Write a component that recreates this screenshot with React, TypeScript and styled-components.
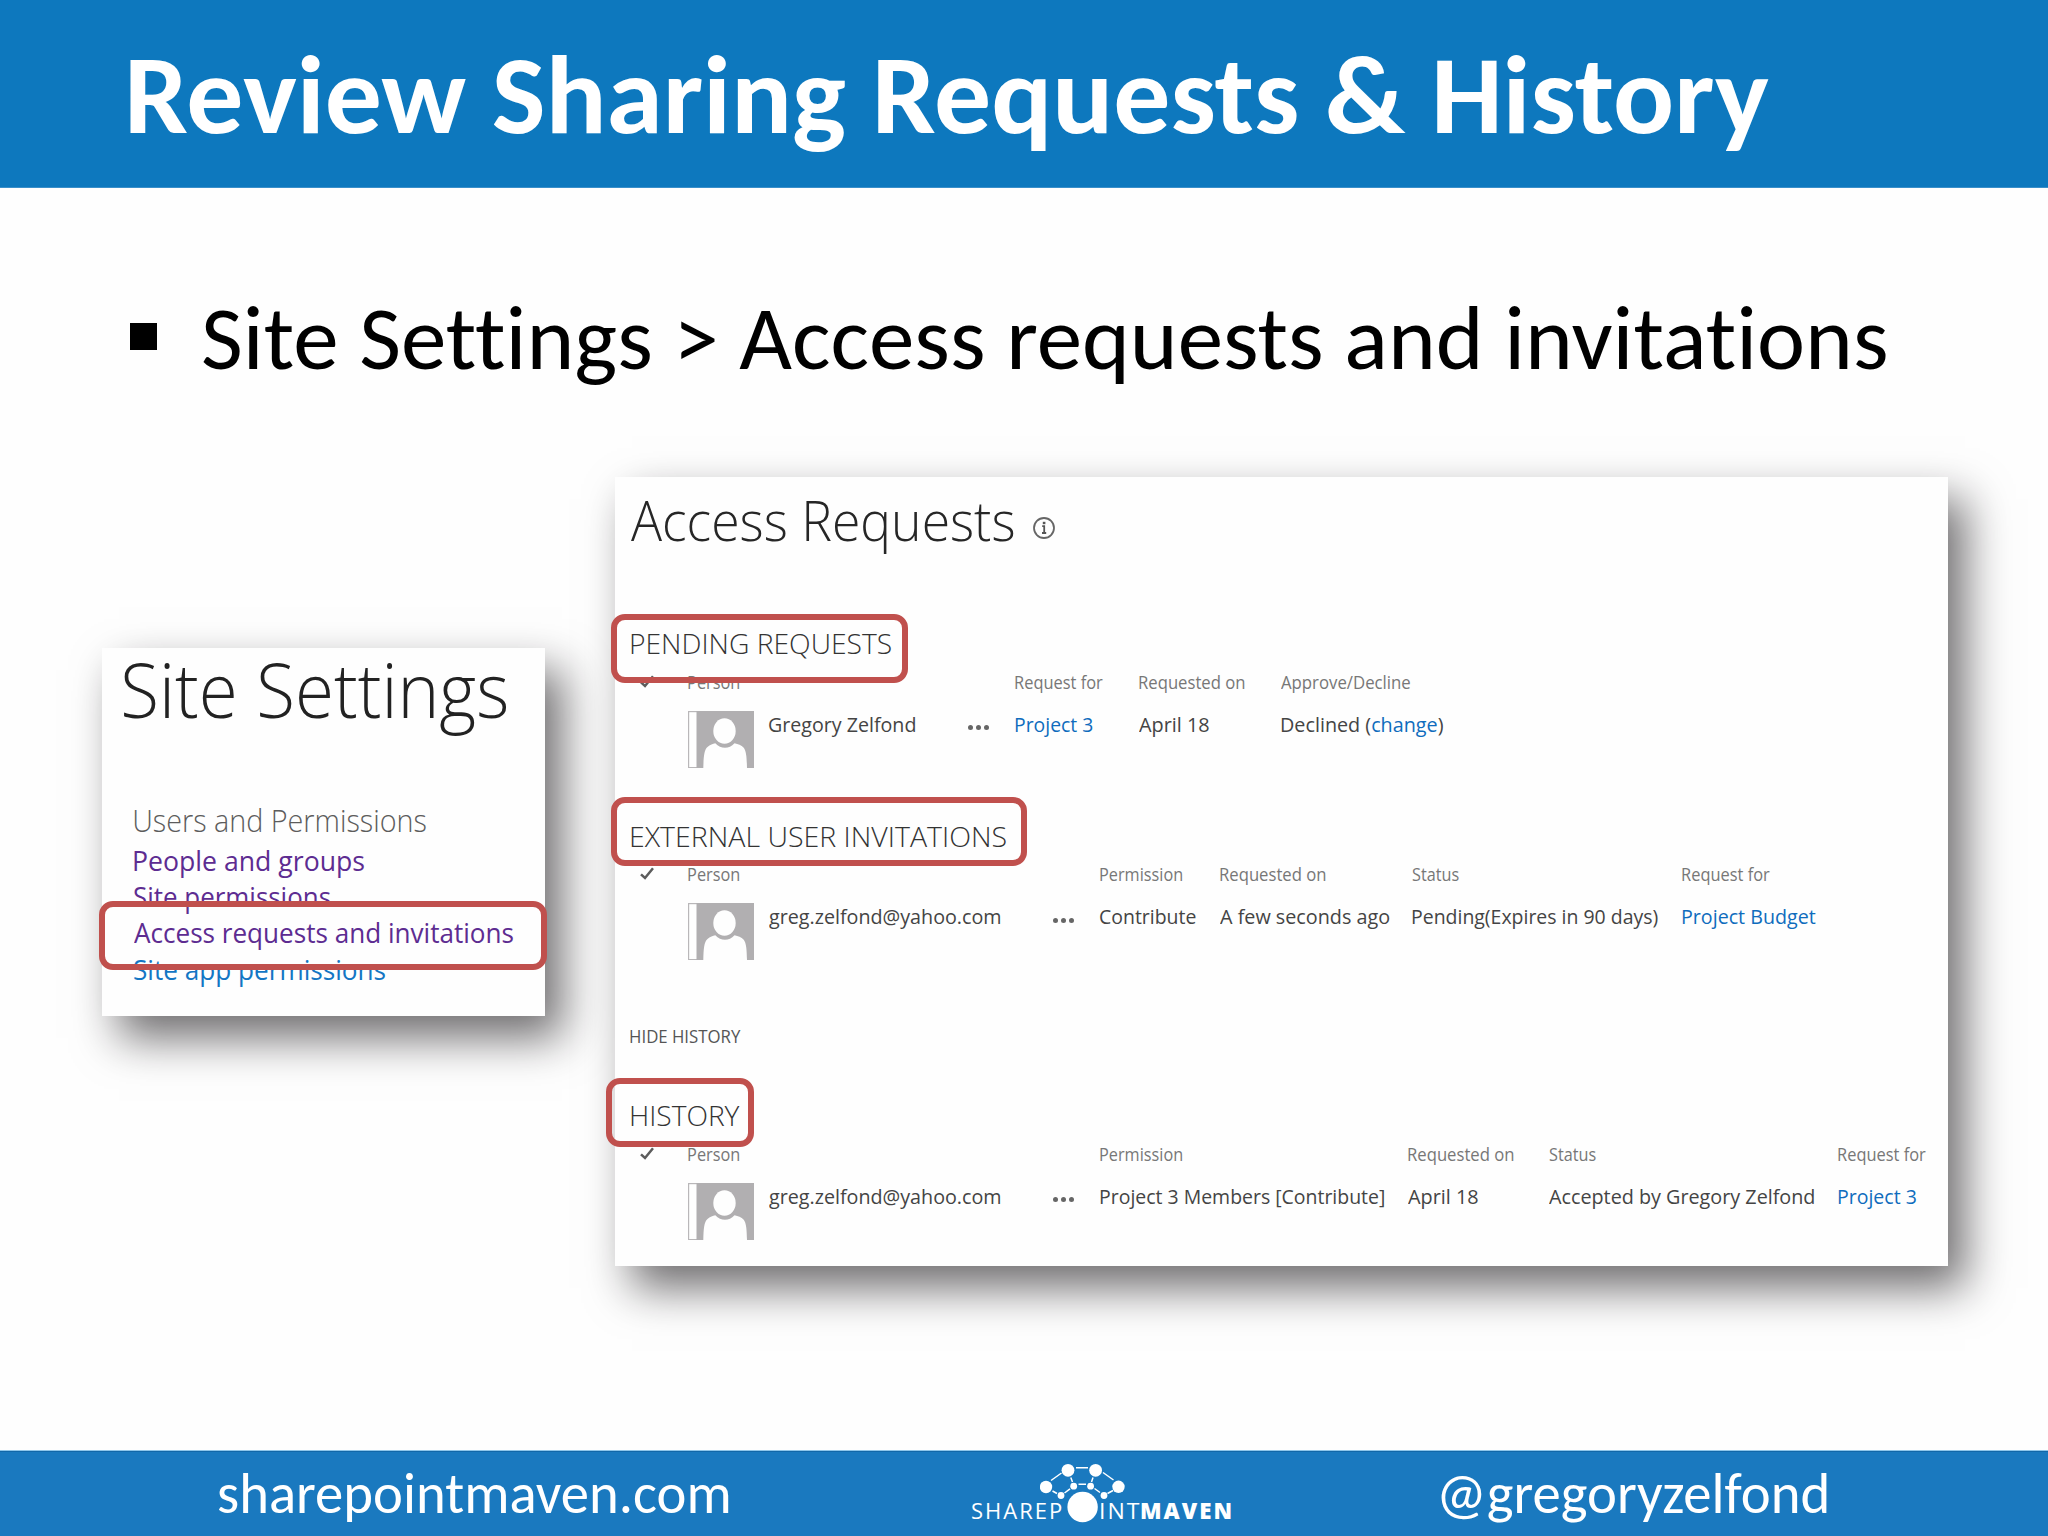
import React, { useLayoutEffect, useRef, useState } from "react";
import styled, { createGlobalStyle } from "styled-components";

const UI = '"Open Sans", "Noto Sans", sans-serif';
const DISPLAY = 'Carlito, Calibri, Lato, "Open Sans", sans-serif';

const GlobalStyle = createGlobalStyle`
  body { margin: 0; background: #fefefe; }
  * { box-sizing: border-box; }
`;

/* ---------- text fitted to an exact ink width ---------- */

const FitBox = styled.div<{ $w: number }>`
  width: ${(p) => p.$w}px;
  flex: none;
  white-space: nowrap;
  font-variant-ligatures: none;
`;

const FitInner = styled.span`
  display: inline-block;
  transform-origin: 0 50%;
`;

function Fit({ w, children }: { w: number; children: React.ReactNode }) {
  const ref = useRef<HTMLSpanElement>(null);
  const [transform, setTransform] = useState("none");
  useLayoutEffect(() => {
    const el = ref.current;
    const ctx = document.createElement("canvas").getContext("2d");
    if (!el || !ctx) return;
    const cs = getComputedStyle(el);
    ctx.font = `${cs.fontWeight} ${cs.fontSize} ${cs.fontFamily}`;
    if (cs.letterSpacing !== "normal") (ctx as any).letterSpacing = cs.letterSpacing;
    const m = ctx.measureText(el.textContent || "");
    const spacing = parseFloat(cs.letterSpacing) || 0;
    const start = -m.actualBoundingBoxLeft;
    const rightBearing = Math.max(0, m.width - m.actualBoundingBoxRight - spacing);
    // The laid-out advance has no ligatures, so the ink width is taken from it.
    const ink = el.offsetWidth - spacing - start - rightBearing;
    const s = w / ink;
    setTransform(`translateX(${-start * s}px) scaleX(${s})`);
  }, [w]);
  return (
    <FitBox $w={w}>
      <FitInner ref={ref} style={{ transform }}>
        {children}
      </FitInner>
    </FitBox>
  );
}

/* ---------- slide frame ---------- */

const Slide = styled.div`
  width: 2048px;
  height: 1536px;
  overflow: hidden;
  display: flex;
  flex-direction: column;
  background: #fefefe;
  font-family: ${UI};
`;

const Banner = styled.header`
  height: 188px;
  flex: none;
  background: #0d78be;
  border-bottom: 1px solid #3a8fca;
  padding: 5px 0 0 130px;
  color: #fff;
  font: 700 112px/180px ${DISPLAY};
`;

const BulletLine = styled.div`
  display: flex;
  align-items: center;
  gap: 46px;
  height: 120px;
  margin: 91px 0 78px;
  padding-left: 130px;
  font: 400 89.5px/120px ${DISPLAY};
  color: #000;
`;

const Bullet = styled.i`
  width: 27px;
  height: 27px;
  background: #000;
  margin-top: -6px;
`;

const Panels = styled.main`
  display: flex;
  align-items: flex-start;
  gap: 70px;
  padding-left: 102px;
`;

const Card = styled.section<{ $w: number; $h: number; $top?: number }>`
  width: ${(p) => p.$w}px;
  height: ${(p) => p.$h}px;
  margin-top: ${(p) => p.$top || 0}px;
  flex: none;
  background: #fefefe;
  box-shadow: 17px 22px 42px rgba(16, 14, 16, 0.6);
`;

const Highlight = styled.span<{ $x: number; $y: number; $w: number }>`
  position: absolute;
  left: ${(p) => p.$x}px;
  top: ${(p) => p.$y}px;
  width: ${(p) => p.$w}px;
  height: 69px;
  border: 6.5px solid #c0504d;
  border-radius: 14px;
  z-index: 2;
`;

/* ---------- site settings card ---------- */

const SettingsTitle = styled.h2`
  margin: 0;
  padding: 1px 0 0 22px;
  height: 81px;
  font: 300 75px/80px ${UI};
  color: #222;
`;

const SettingsGroup = styled.h3`
  margin: 71px 0 3px;
  padding-left: 31.5px;
  font: 300 31px/40px ${UI};
  color: #5c5c5c;
`;

const SettingsLink = styled.div<{ $fresh?: boolean }>`
  position: relative;
  margin-left: 31.5px;
  height: 36.2px;
  font: 400 27px/36.2px ${UI};
  color: ${(p) => (p.$fresh ? "#1376c4" : "#5d2c91")};
`;

/* ---------- access requests card ---------- */

const RequestsTitle = styled.h2`
  display: flex;
  align-items: center;
  gap: 18px;
  margin: 3px 0 63px;
  padding-left: 16px;
  height: 80px;
  font: 300 55px/80px ${UI};
  color: #262626;
`;

const InfoIcon = styled.svg`
  width: 24px;
  height: 24px;
  margin-top: 16px;
`;

const Section = styled.div`
  height: 145px;
`;

const SectionHead = styled.h3`
  position: relative;
  margin: 0 0 6.6px;
  padding-left: 16px;
  height: 40px;
  font: 300 28px/40px ${UI};
  color: #333;
`;

const Row = styled.div<{ $cols: string }>`
  display: grid;
  grid-template-columns: ${(p) => p.$cols};
  align-items: start;
`;

const HeadRow = styled(Row)`
  height: 24px;
  margin-bottom: 16px;
  font: 400 17.5px/25px ${UI};
  color: #777;
`;

const DataRow = styled(Row)`
  height: 58px;
  font: 400 20px/30px ${UI};
  color: #444;
`;

const Link = styled.span`
  color: #0f6cbd;
`;

const CheckIcon = styled.svg`
  width: 14px;
  height: 13px;
  margin: 5px 0 0 25px;
`;

const AvatarSvg = styled.svg`
  display: block;
  width: 66px;
  height: 57px;
  margin-top: 1px;
`;

const Dots = styled.div`
  display: flex;
  gap: 3.2px;
  padding-top: 15.5px;
`;

const Dot = styled.i`
  width: 5px;
  height: 5px;
  border-radius: 50%;
  background: #666;
`;

const HideHistory = styled.div`
  margin: 63px 0 47.5px;
  padding-left: 15px;
  height: 24px;
  font: 400 18px/24px ${UI};
  color: #555;
`;

const Spacer = styled.div`
  height: 47.6px;
`;

function Check() {
  return (
    <CheckIcon viewBox="0 0 14 13" fill="none">
      <path d="M1 7.4 5 11 13 1.2" stroke="#5c5c5c" strokeWidth="2.5" />
    </CheckIcon>
  );
}

function Avatar() {
  return (
    <AvatarSvg viewBox="0 0 66 57">
      <rect x="0.6" y="0.6" width="10" height="56" fill="#fff" stroke="#b9b7b9" strokeWidth="1.2" />
      <rect x="8.5" y="0" width="57.5" height="57" fill="#b1afb1" />
      <path
        d="M15.3 57C15.6 46 16 39 19.5 36 22 33.8 25 33 27.3 32.3 33 38.3 41 38.3 46.5 32.3 50 33.2 53.5 34.2 55.5 36.5 58.5 40 58.7 47 59 57Z"
        fill="#fefefe"
      />
      <ellipse cx="36.5" cy="20" rx="11.2" ry="12.7" fill="#fefefe" />
    </AvatarSvg>
  );
}

type Cell = { w: number; text: React.ReactNode; link?: boolean };

function Requests(props: {
  title: string;
  titleW: number;
  box: [number, number, number];
  cols: string;
  heads: Cell[];
  name: Cell;
  cells: Cell[];
}) {
  const { title, titleW, box, cols, heads, name, cells } = props;
  return (
    <Section>
      <SectionHead>
        <Fit w={titleW}>{title}</Fit>
        <Highlight $x={box[0]} $y={box[1]} $w={box[2]} />
      </SectionHead>
      <HeadRow $cols={cols}>
        <Check />
        <Fit w={51.5}>Person</Fit>
        <span />
        <span />
        {heads.map((c, i) => (
          <Fit key={i} w={c.w}>{c.text}</Fit>
        ))}
      </HeadRow>
      <DataRow $cols={cols}>
        <span />
        <Avatar />
        <Fit w={name.w}>{name.text}</Fit>
        <Dots>
          <Dot />
          <Dot />
          <Dot />
        </Dots>
        {cells.map((c, i) => (
          <Fit key={i} w={c.w}>{c.link ? <Link>{c.text}</Link> : c.text}</Fit>
        ))}
      </DataRow>
    </Section>
  );
}

/* ---------- footer ---------- */

const Footer = styled.footer`
  display: flex;
  align-items: flex-start;
  height: 86px;
  margin-top: auto;
  padding-left: 218px;
  background: #1a79bf;
  border-top: 1px solid #8fc6ea;
  box-shadow: inset 0 1px 0 #1267a8;
  color: #fff;
  font: 400 56.5px/86px ${DISPLAY};
`;

const Logo = styled.div`
  position: relative;
  display: flex;
  width: 259px;
  margin: 0 210px 0 243.5px;
  padding-top: 35px;
  font: 400 22.4px/50px ${UI};
  letter-spacing: 2px;
`;

const LogoGap = styled.span`
  width: 39px;
`;

const LogoBold = styled.span`
  margin-left: 2px;
  font-weight: 800;
`;

const LogoMark = styled.svg`
  position: absolute;
  left: 68px;
  top: 9px;
  width: 90px;
  height: 66px;
`;

function NetworkMark() {
  return (
    <LogoMark viewBox="1040 1460 90 66" fill="#fff">
      <g stroke="#fff" strokeWidth="1.5">
        <path d="M1051 1480.5 1061.5 1473M1076 1467.8H1088M1103 1472.5 1113.5 1480M1052.5 1491 1057 1493.5M1064.5 1493 1070 1488.8M1070.8 1477.5 1072.5 1482M1078.5 1484.3H1086M1093 1477.5 1091.5 1482M1094.5 1488.5 1100 1492.5M1107.5 1493.5 1113 1490.5" />
      </g>
      <circle cx="1046" cy="1487" r="6.2" />
      <circle cx="1068" cy="1470.3" r="6.4" />
      <circle cx="1095.6" cy="1470.3" r="6.4" />
      <circle cx="1118.5" cy="1486.8" r="6.2" />
      <circle cx="1061" cy="1495.5" r="3.4" />
      <circle cx="1073.7" cy="1486.2" r="3.4" />
      <circle cx="1090.6" cy="1486.2" r="3.4" />
      <circle cx="1104" cy="1495.5" r="3.4" />
      <circle cx="1082.6" cy="1507" r="15.2" />
    </LogoMark>
  );
}

export default function App() {
  return (
    <>
      <GlobalStyle />
      <Slide>
        <Banner>
          <Fit w={1638.5}>Review Sharing Requests &amp; History</Fit>
        </Banner>
        <BulletLine>
          <Bullet />
          <Fit w={1683}>Site Settings &gt; Access requests and invitations</Fit>
        </BulletLine>
        <Panels>
          <Card $w={443} $h={368} $top={171}>
            <SettingsTitle>
              <Fit w={382.5}>Site Settings</Fit>
            </SettingsTitle>
            <SettingsGroup>
              <Fit w={292.5}>Users and Permissions</Fit>
            </SettingsGroup>
            <SettingsLink>
              <Fit w={230}>People and groups</Fit>
            </SettingsLink>
            <SettingsLink>
              <Fit w={196}>Site permissions</Fit>
            </SettingsLink>
            <SettingsLink>
              <Fit w={379}>Access requests and invitations</Fit>
              <Highlight $x={-34.2} $y={-14.4} $w={448} />
            </SettingsLink>
            <SettingsLink $fresh>
              <Fit w={251}>Site app permissions</Fit>
            </SettingsLink>
          </Card>

          <Card $w={1333} $h={789}>
            <RequestsTitle>
              <Fit w={383}>Access Requests</Fit>
              <InfoIcon viewBox="0 0 24 24" fill="none">
                <circle cx="12" cy="12" r="10" stroke="#666" strokeWidth="1.8" />
                <path d="M10.2 10.2H12.2V16.6M10 17H14.2" stroke="#555" strokeWidth="1.8" />
                <rect x="10.8" y="5.8" width="2.6" height="2.4" fill="#555" />
              </InfoIcon>
            </RequestsTitle>

            <Requests
              title="PENDING REQUESTS"
              titleW={260}
              box={[-4, -9.4, 297]}
              cols="73px 80.5px 199px 47.5px 124px 142px 1fr"
              heads={[
                { w: 88, text: "Request for" },
                { w: 106, text: "Requested on" },
                { w: 128.5, text: "Approve/Decline" },
              ]}
              name={{ w: 146, text: "Gregory Zelfond" }}
              cells={[
                { w: 78, text: "Project 3", link: true },
                { w: 70, text: "April 18" },
                { w: 162, text: <>Declined (<Link>change</Link>)</> },
              ]}
            />
            <Spacer />
            <Requests
              title="EXTERNAL USER INVITATIONS"
              titleW={374.5}
              box={[-4, -18.8, 416]}
              cols="73px 80.5px 284.5px 47px 119.5px 192.5px 270px 1fr"
              heads={[
                { w: 82, text: "Permission" },
                { w: 106, text: "Requested on" },
                { w: 47, text: "Status" },
                { w: 88, text: "Request for" },
              ]}
              name={{ w: 231, text: "greg.zelfond@yahoo.com" }}
              cells={[
                { w: 96, text: "Contribute" },
                { w: 169, text: "A few seconds ago" },
                { w: 246, text: "Pending(Expires in 90 days)" },
                { w: 133.5, text: "Project Budget", link: true },
              ]}
            />
            <HideHistory>
              <Fit w={110}>HIDE HISTORY</Fit>
            </HideHistory>
            <Requests
              title="HISTORY"
              titleW={108.5}
              box={[-9, -17.4, 148]}
              cols="73px 80.5px 284.5px 47px 307.5px 141.5px 289px 1fr"
              heads={[
                { w: 82, text: "Permission" },
                { w: 106, text: "Requested on" },
                { w: 47, text: "Status" },
                { w: 88, text: "Request for" },
              ]}
              name={{ w: 231, text: "greg.zelfond@yahoo.com" }}
              cells={[
                { w: 283.5, text: "Project 3 Members [Contribute]" },
                { w: 70, text: "April 18" },
                { w: 265.5, text: "Accepted by Gregory Zelfond" },
                { w: 78.5, text: "Project 3", link: true },
              ]}
            />
          </Card>
        </Panels>

        <Footer>
          <Fit w={510.5}>sharepointmaven.com</Fit>
          <Logo>
            <Fit w={90}>SHAREP</Fit>
            <LogoGap />
            <Fit w={38}>INT</Fit>
            <LogoBold>
              <Fit w={89}>MAVEN</Fit>
            </LogoBold>
            <NetworkMark />
          </Logo>
          <Fit w={386}>@gregoryzelfond</Fit>
        </Footer>
      </Slide>
    </>
  );
}
